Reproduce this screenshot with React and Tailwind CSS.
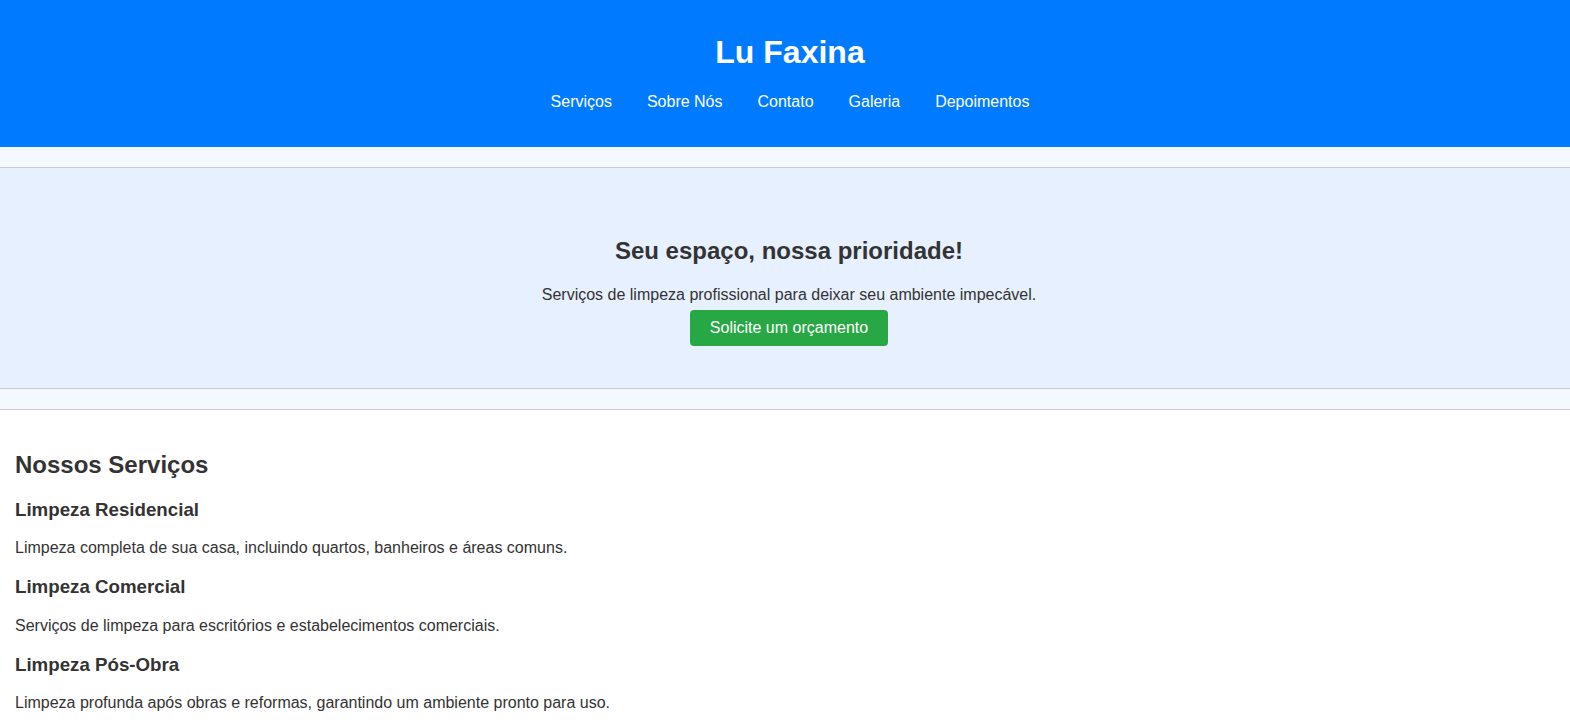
const navLinks = ["Serviços", "Sobre Nós", "Contato", "Galeria", "Depoimentos"];

const services = [
  {
    title: "Limpeza Residencial",
    text: "Limpeza completa de sua casa, incluindo quartos, banheiros e áreas comuns."
  },
  {
    title: "Limpeza Comercial",
    text: "Serviços de limpeza para escritórios e estabelecimentos comerciais."
  },
  {
    title: "Limpeza Pós-Obra",
    text: "Limpeza profunda após obras e reformas, garantindo um ambiente pronto para uso."
  }
];

const App = () => {
  return (
    <div className="min-h-screen bg-[#f4f9ff] text-[#333] font-['Liberation_Sans',Arial,sans-serif]">
      <header className="bg-[#007bff] text-white pt-[34px] pb-[36px] pl-[10px] text-center">
        <h1 className="text-[32px] leading-[36px] font-bold">Lu Faxina</h1>
        <nav className="mt-[23px]">
          <ul className="flex justify-center gap-[35px] text-base leading-[18px]">
            {navLinks.map((link) => (
              <li key={link}>
                <a href="#" className="text-white">
                  {link}
                </a>
              </li>
            ))}
          </ul>
        </nav>
      </header>

      <section className="mt-[20px] border-y border-[#ccc] bg-[#e6f0ff] pt-[69px] pb-[42px] pl-2 text-center">
        <h2 className="text-2xl leading-[28px] font-bold">Seu espaço, nossa prioridade!</h2>
        <p className="mt-[21px] text-base leading-[18px]">
          Serviços de limpeza profissional para deixar seu ambiente impecável.
        </p>
        <a
          href="#"
          className="mt-[6px] inline-block h-[36px] px-[20px] leading-[36px] bg-[#28a745] text-white rounded-[4px]"
        >
          Solicite um orçamento
        </a>
      </section>

      <section className="mt-[20px] border-t border-[#ccc] bg-white pt-[41px] pb-[20px] px-[15px]">
        <h2 className="text-2xl leading-[28px] font-bold">Nossos Serviços</h2>
        {services.map((s, i) => (
          <div key={s.title}>
            <h3 className={`${i === 0 ? "mt-[20px]" : "mt-[18.72px]"} text-[18.72px] leading-[21.5px] font-bold`}>
              {s.title}
            </h3>
            <p className="mt-[18.72px] text-base leading-[18.4px]">{s.text}</p>
          </div>
        ))}
      </section>
    </div>
  );
};

export default App;
